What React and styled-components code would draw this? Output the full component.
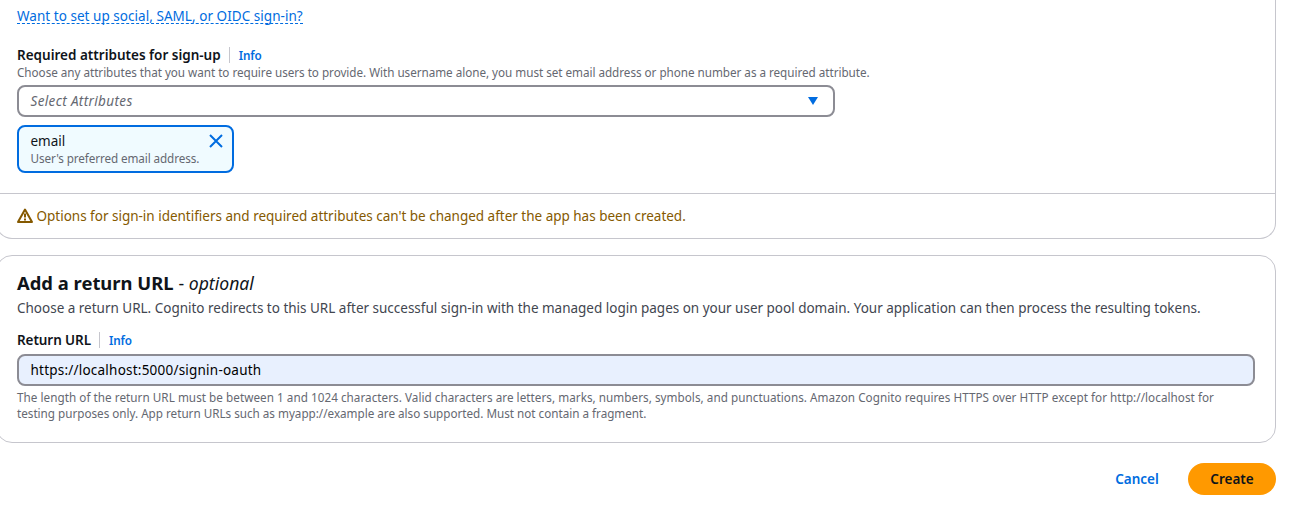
import React from "react";
import styled, { createGlobalStyle } from "styled-components";

const Global = createGlobalStyle`
  *, *::before, *::after { box-sizing: border-box; }
  html, body { margin: 0; background: #fff; overflow: hidden; }
  body { font-family: "Noto Sans", "Open Sans", sans-serif; font-size: 13.5px; line-height: 20px; color: #0f141a; }
`;

const Page = styled.main`
  width: 1280px;
  height: 508px;
  margin-left: -4px;
  display: flex;
  flex-direction: column;
`;

const Card = styled.section`
  border: 1px solid #c6c6cd;
  border-radius: 16px;
  background: #fff;
  display: flex;
  flex-direction: column;
  align-items: stretch;
`;

const SignUpCard = styled(Card)`
  height: 239px;
  border-top: 0;
  border-radius: 0 0 16px 16px;
`;

const ReturnCard = styled(Card)`
  height: 188px;
  margin-top: 16px;
  padding: 15px 20px 0;
`;

const CardBody = styled.div`
  height: 193px;
  padding: 5px 20px 0;
`;

const CardFooter = styled.div`
  flex: 1;
  border-top: 1px solid #c6c6cd;
  padding: 0 20px;
  display: flex;
  align-items: center;
  gap: 3.5px;
  color: #855900;
`;

const Text = styled.span`
  white-space: nowrap;
  letter-spacing: ${(p) => p.$track || 0}px;
`;

const DashedLink = styled.a`
  display: block;
  width: fit-content;
  height: 19px;
  line-height: 22px;
  color: #006ce0;
  white-space: nowrap;
  letter-spacing: 0.04px;
  border-bottom: 1px dashed #006ce0;
`;

const FieldLabel = styled.div`
  display: flex;
  align-items: center;
  height: 20px;
  line-height: 21px;
  font-weight: 600;
  margin-top: ${(p) => p.$top}px;
`;

const Info = styled.a`
  height: 16px;
  margin-left: 8px;
  padding-left: 9px;
  border-left: 1px solid #c6c6cd;
  color: #006ce0;
  font-size: 11.7px;
  line-height: 16px;
`;

const Hint = styled.div`
  margin-top: -1px;
  padding-bottom: 1px;
  color: #656871;
  font-size: 11.7px;
  line-height: 16px;
  display: flex;
  flex-direction: column;
  align-items: flex-start;
`;

const Select = styled.div`
  width: 818px;
  height: 32px;
  margin-top: 4px;
  padding: 0 15px 0 11.5px;
  border: 2px solid #8c8c94;
  border-radius: 8px;
  display: flex;
  align-items: center;
  justify-content: space-between;
  color: #656871;
  font-style: italic;
`;

const Token = styled.div`
  width: 217px;
  height: 48px;
  margin-top: 8px;
  padding: 4px 9px 0 11.5px;
  border: 2px solid #006ce0;
  border-radius: 8px;
  background: #f0fbff;
  display: flex;
  justify-content: space-between;
`;

const TokenText = styled.div`
  display: flex;
  flex-direction: column;
  align-items: flex-start;
`;

const Heading = styled.h2`
  margin: 0;
  height: 26px;
  display: flex;
  align-items: baseline;
  gap: 5px;
  font-size: 18.4px;
  line-height: 24px;
  font-weight: 700;
`;

const Optional = styled(Text)`
  font-size: 17.6px;
  font-weight: 400;
  em { font-style: italic; }
`;

const Description = styled.p`
  margin: 0;
  height: 20px;
  line-height: 22px;
  color: #424650;
`;

const Input = styled.div`
  height: 32px;
  margin: 4px 0;
  padding: 0 11.5px;
  border: 2px solid #8c8c94;
  border-radius: 8px;
  background: #e8f0fe;
  display: flex;
  align-items: center;
  color: #000;
`;

const Actions = styled.div`
  display: flex;
  justify-content: flex-end;
  margin-top: 20px;
`;

const Button = styled.button`
  height: 32px;
  width: ${(p) => p.$width}px;
  border: 0;
  border-radius: 20px;
  padding: 0;
  font: inherit;
  font-weight: 600;
  color: ${(p) => (p.$primary ? "#0f141a" : "#006ce0")};
  background: ${(p) => (p.$primary ? "#ff9900" : "transparent")};
`;

const Icon = styled.svg`
  display: block;
  flex: none;
  margin-top: ${(p) => p.$top || 0}px;
`;

export default function App() {
  return (
    <>
      <Global />
      <Page>
        <SignUpCard>
          <CardBody>
            <DashedLink>Want to set up social, SAML, or OIDC sign-in?</DashedLink>
            <FieldLabel $top={21}>
              <Text>Required attributes for sign-up</Text>
              <Info><Text $track={-0.1}>Info</Text></Info>
            </FieldLabel>
            <Hint>
              <Text $track={-0.03}>Choose any attributes that you want to require users to provide. With username alone, you must set email address or phone number as a required attribute.</Text>
            </Hint>
            <Select>
              <Text $track={0.36}>Select Attributes</Text>
              <Icon width="10" height="8" viewBox="0 0 10 8"><path d="M0 0h10L5 8z" fill="#006ce0" /></Icon>
            </Select>
            <Token>
              <TokenText>
                <Text>email</Text>
                <Hint><Text $track={-0.1}>User's preferred email address.</Text></Hint>
              </TokenText>
              <Icon $top={3} width="14" height="14" viewBox="0 0 14 14"><path d="M1 1l12 12M13 1L1 13" stroke="#006ce0" strokeWidth="2" /></Icon>
            </Token>
          </CardBody>
          <CardFooter>
            <Icon width="16" height="16" viewBox="0 0 16 16">
              <path d="M8 1.5 15 14H1Z" fill="none" stroke="#855900" strokeWidth="2" strokeLinejoin="round" />
              <path d="M8 5.5v4M8 10.5v2" stroke="#855900" strokeWidth="2" />
            </Icon>
            <Text $track={-0.01}>Options for sign-in identifiers and required attributes can't be changed after the app has been created.</Text>
          </CardFooter>
        </SignUpCard>
        <ReturnCard>
          <Heading>
            <Text>Add a return URL</Text>
            <Optional>- <em>optional</em></Optional>
          </Heading>
          <Description>
            <Text $track={-0.01}>Choose a return URL. Cognito redirects to this URL after successful sign-in with the managed login pages on your user pool domain. Your application can then process the resulting tokens.</Text>
          </Description>
          <FieldLabel $top={13}>
            <Text $track={-0.08}>Return URL</Text>
            <Info><Text $track={-0.1}>Info</Text></Info>
          </FieldLabel>
          <Input><Text $track={0.22}>https://localhost:5000/signin-oauth</Text></Input>
          <Hint>
            <Text $track={0.04}>The length of the return URL must be between 1 and 1024 characters. Valid characters are letters, marks, numbers, symbols, and punctuations. Amazon Cognito requires HTTPS over HTTP except for http://localhost for</Text>
            <Text $track={-0.01}>testing purposes only. App return URLs such as myapp://example are also supported. Must not contain a fragment.</Text>
          </Hint>
        </ReturnCard>
        <Actions>
          <Button $width={102}><Text>Cancel</Text></Button>
          <Button $primary $width={88}><Text>Create</Text></Button>
        </Actions>
      </Page>
    </>
  );
}
